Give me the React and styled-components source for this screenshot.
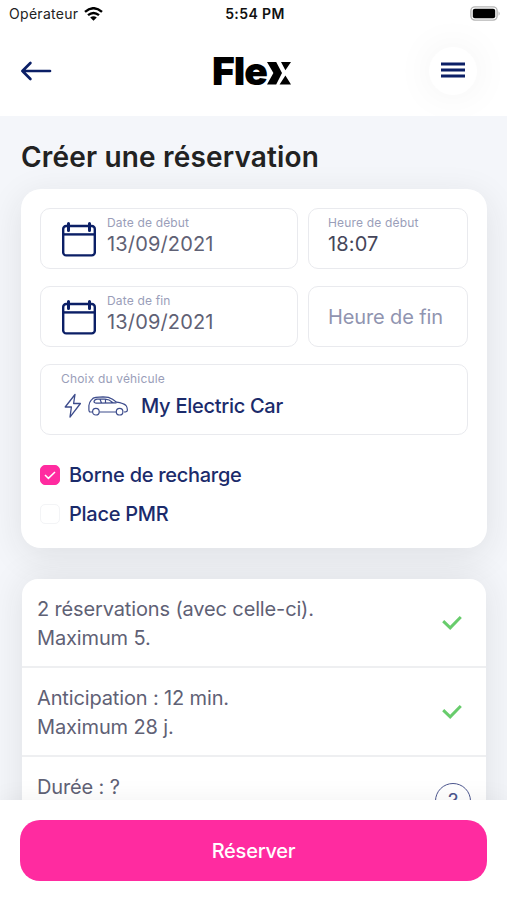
import React, { useState } from 'react';
import styled, { createGlobalStyle } from 'styled-components';

const checks = [
    { id: 'count', lines: ['2 réservations (avec celle-ci).', 'Maximum 5.'], ok: true },
    { id: 'anticipation', lines: ['Anticipation : 12 min.', 'Maximum 28 j.'], ok: true },
    { id: 'duration', lines: ['Durée : ?'], ok: false },
];

const CalendarIcon = () => (
    <svg width="36" height="36" viewBox="0 0 36 36" fill="none" stroke="#0b1f66" strokeWidth="2.4">
        <rect x="2.2" y="5" width="31.6" height="29.4" rx="3" />
        <path d="M2 13.4h32" />
        <path d="M7.5 2.6v7M28.5 2.6v7" strokeWidth="3" strokeLinecap="round" />
    </svg>
);

const CarIcon = () => (
    <svg width="40" height="20" viewBox="0 0 40 20" fill="none" stroke="#3d4c8c" strokeWidth="1.2">
        <path d="M4.4 16H2.2Q.9 16 .9 13.5V9.5Q1.2 6.5 3.2 4.2Q5 1.4 7.8 1.3L15 .9Q21 .9 24.6 3.2L28.5 6.2Q35.6 7.2 38 9.5Q39.6 11.5 39.3 14.5Q39.2 16 36 16" />
        <path d="M11.4 16h16.8M28.5 6.9L10 7.1Q6.4 7.2 6 5.8Q6.2 3.5 9 3.2H17Q21 3.1 25 6.7M12 3.2l1.5 3.8M17.5 3.2v3.8" />
        <circle cx="7.9" cy="15.7" r="3.3" />
        <circle cx="31.6" cy="15.7" r="3.3" />
    </svg>
);

const App = () => {
    const [charging, setCharging] = useState(true);
    const [disabledSpot, setDisabledSpot] = useState(false);

    return (
        <Screen>
            <GlobalStyle />
            <StatusBar>
                <Carrier>
                    Opérateur
                    <svg width="19" height="14" viewBox="0 0 19 14" fill="none" stroke="#000" strokeWidth="2.4">
                        <path d="M1 4.8Q9.5-2.4 18 4.8M4 8.2Q9.5 3.6 15 8.2" />
                        <path d="M6.2 10.6Q9.5 7.8 12.8 10.6L9.5 13.8Z" fill="#000" stroke="none" />
                    </svg>
                </Carrier>
                <Clock>5:54 PM</Clock>
                <Battery width="31" height="15" viewBox="0 0 31 15">
                    <rect x=".9" y=".9" width="26.2" height="13.2" rx="4" fill="#fff" stroke="#b5b5b5" strokeWidth="1.4" />
                    <rect x="2.8" y="2.8" width="22.4" height="9.4" rx="2" />
                    <path d="M28.6 5.2q2 2.3 0 4.6z" fill="#aaa" />
                </Battery>
            </StatusBar>
            <Header>
                <IconButton aria-label="Retour">
                    <svg width="32" height="20" viewBox="0 0 32 20" fill="none" stroke="#0b1f66" strokeWidth="2.7" strokeLinecap="round" strokeLinejoin="round">
                        <path d="M30 10H2.4M10.4 2L2.4 10l8 8" />
                    </svg>
                </IconButton>
                <Logo>
                    Fle
                    <svg width="24" height="23" viewBox="0 0 24 23">
                        <path d="M0 0H9.2L15 11L9.2 22.4H0L6.4 11ZM14 0H24L18.4 8.2ZM18.4 13.6L24 22.4H12.6Z" />
                    </svg>
                </Logo>
                <MenuButton aria-label="Menu">
                    <svg width="24" height="17" viewBox="0 0 24 17" stroke="#0b1f66" strokeWidth="3">
                        <path d="M0 2h24M0 8h24M0 14h24" />
                    </svg>
                </MenuButton>
            </Header>
            <Content>
                <Title>Créer une réservation</Title>
                <FormCard>
                    <FieldRow>
                        <Field>
                            <CalendarIcon />
                            <FieldText>
                                <Label>Date de début</Label>
                                <Value>13/09/2021</Value>
                            </FieldText>
                        </Field>
                        <Field>
                            <FieldText>
                                <Label>Heure de début</Label>
                                <Value $dark>18:07</Value>
                            </FieldText>
                        </Field>
                    </FieldRow>
                    <FieldRow>
                        <Field>
                            <CalendarIcon />
                            <FieldText>
                                <Label>Date de fin</Label>
                                <Value>13/09/2021</Value>
                            </FieldText>
                        </Field>
                        <Field>
                            <Placeholder>Heure de fin</Placeholder>
                        </Field>
                    </FieldRow>
                    <VehicleField>
                        <Label>Choix du véhicule</Label>
                        <Vehicle>
                            <svg width="18" height="26" viewBox="0 0 18 26" fill="none" stroke="#3d4c8c" strokeWidth="1.3" strokeLinejoin="round">
                                <path d="M11 1.5L1.2 14H7.4L6 24.2L16.4 10.5H9.6Z" />
                            </svg>
                            <CarIcon />
                            <VehicleName>My Electric Car</VehicleName>
                        </Vehicle>
                    </VehicleField>
                    <Options>
                        <Option onClick={() => setCharging(!charging)}>
                            <Checkbox $checked={charging}>
                                {charging && (
                                    <svg width="12" height="9" viewBox="0 0 12 9" fill="none" stroke="#fff" strokeWidth="1.5">
                                        <path d="M1 4l3.4 3.4L11 1" />
                                    </svg>
                                )}
                            </Checkbox>
                            <OptionName>Borne de recharge</OptionName>
                        </Option>
                        <Option onClick={() => setDisabledSpot(!disabledSpot)}>
                            <Checkbox $checked={disabledSpot} />
                            <OptionName>Place PMR</OptionName>
                        </Option>
                    </Options>
                </FormCard>
                <CheckList>
                    {checks.map(check => (
                        <CheckRow key={check.id}>
                            <div>
                                {check.lines.map(line => (
                                    <CheckLine key={line}>{line}</CheckLine>
                                ))}
                            </div>
                            {check.ok ? (
                                <Tick width="20" height="15" viewBox="0 0 20 15">
                                    <path d="M1.2 6.2l7 6.6L18.8 2" />
                                </Tick>
                            ) : (
                                <Unknown>?</Unknown>
                            )}
                        </CheckRow>
                    ))}
                </CheckList>
            </Content>
            <BottomBar>
                <SubmitButton>Réserver</SubmitButton>
            </BottomBar>
        </Screen>
    );
};

export default App;

const GlobalStyle = createGlobalStyle`
    * {
        box-sizing: border-box;
    }

    body {
        margin: 0;
        overflow: hidden;
        font-family: Inter, sans-serif;
    }

    svg {
        display: block;
        flex-shrink: 0;
    }

    button {
        border: 0;
        padding: 0;
        font-family: inherit;
        cursor: pointer;
    }
`;

const Screen = styled.div`
    display: flex;
    flex-direction: column;
    height: 100vh;
    background: #fff;
`;

const StatusBar = styled.div`
    display: grid;
    grid-template-columns: 1fr auto 1fr;
    align-items: center;
    height: 27px;
    flex-shrink: 0;
    padding: 0 6px 0 9px;
`;

const Carrier = styled.div`
    display: flex;
    align-items: center;
    gap: 6px;
    font-size: 14px;
    letter-spacing: 0.3px;
    color: #222;
`;

const Clock = styled.div`
    font-size: 14px;
    font-weight: 600;
    letter-spacing: 0.4px;
    color: #111;
`;

const Battery = styled.svg`
    justify-self: end;
`;

const Header = styled.header`
    display: flex;
    align-items: center;
    justify-content: space-between;
    height: 89px;
    flex-shrink: 0;
    padding: 0 30px 2px 20px;
`;

const IconButton = styled.button`
    display: flex;
    width: 48px;
    background: none;
`;

const Logo = styled.div`
    display: flex;
    align-items: baseline;
    margin-left: 6px;
    font-size: 39px;
    line-height: 44px;
    font-weight: 900;
    letter-spacing: -1px;
    color: #000;
`;

const MenuButton = styled.button`
    display: flex;
    align-items: center;
    justify-content: center;
    width: 48px;
    height: 48px;
    border-radius: 50%;
    background: #fff;
    box-shadow: 0 0 40px rgba(0, 0, 0, 0.06);
`;

const Content = styled.main`
    flex: 1;
    min-height: 0;
    overflow: hidden;
    padding: 23px 20px 0 21px;
    background: #f4f6fa;
`;

const Title = styled.h1`
    margin: 0 0 14px;
    font-size: 28px;
    line-height: 36px;
    font-weight: 600;
    letter-spacing: 0.17px;
    color: #222;
`;

const FormCard = styled.section`
    display: flex;
    flex-direction: column;
    gap: 17px;
    height: 359px;
    padding: 19px 19px 0;
    border-radius: 20px;
    background: #fff;
    box-shadow: 0 8px 35px rgba(35, 38, 42, 0.1);
`;

const FieldRow = styled.div`
    display: grid;
    grid-template-columns: 258px 1fr;
    gap: 10px;
`;

const Field = styled.div`
    display: flex;
    align-items: center;
    gap: 10px;
    height: 61px;
    padding: 0 0 0 20px;
    border: 1px solid #e9eaee;
    border-radius: 10px;

    &:last-child {
        padding-left: 19px;
    }
`;

const FieldText = styled.div`
    display: flex;
    flex-direction: column;
    padding-bottom: 6px;
`;

const Label = styled.span`
    font-size: 12px;
    line-height: 16px;
    letter-spacing: 0.17px;
    color: #9a9eb9;
`;

const Value = styled.span`
    font-size: 20px;
    line-height: 26px;
    letter-spacing: 0.15px;
    color: ${props => (props.$dark ? '#45465a' : '#5f6175')};
`;

const Placeholder = styled.span`
    padding-top: 1px;
    white-space: nowrap;
    font-size: 20px;
    letter-spacing: -0.12px;
    color: #9094b0;
`;

const VehicleField = styled.div`
    display: flex;
    flex-direction: column;
    height: 71px;
    padding: 6px 20px;
    border: 1px solid #e9eaee;
    border-radius: 10px;
`;

const Vehicle = styled.div`
    display: flex;
    align-items: center;
    height: 38px;
    padding-left: 3px;
    gap: 6px;
`;

const VehicleName = styled.span`
    margin-left: 7px;
    font-size: 20px;
    font-weight: 500;
    letter-spacing: -0.28px;
    color: #1b2b6b;
`;

const Options = styled.div`
    display: flex;
    flex-direction: column;
    gap: 9px;
    padding-top: 8px;
`;

const Option = styled.label`
    display: flex;
    align-items: center;
    gap: 9px;
    height: 30px;
`;

const Checkbox = styled.span`
    display: flex;
    align-items: center;
    justify-content: center;
    width: 20px;
    height: 20px;
    border: 1px solid ${props => (props.$checked ? '#ff2ba0' : '#f3f4f6')};
    border-radius: 5px;
    background: ${props => (props.$checked ? '#ff2ba0' : '#fff')};
`;

const OptionName = styled.span`
    font-size: 20px;
    font-weight: 500;
    letter-spacing: -0.28px;
    color: #1b2b6b;
`;

const CheckList = styled.section`
    margin: 31px 1px 0;
    height: 270px;
    border-radius: 16px 16px 0 0;
    background: #fff;
    box-shadow: 0 0 35px rgba(35, 38, 42, 0.1);
`;

const CheckRow = styled.div`
    display: flex;
    align-items: center;
    justify-content: space-between;
    height: 89px;
    padding: 2px 15px 0;
    border-bottom: 2px solid #eeeff1;

    &:last-child {
        align-items: flex-start;
        padding-top: 16px;
        border-bottom: 0;
    }
`;

const CheckLine = styled.div`
    font-size: 20px;
    line-height: 29px;
    letter-spacing: -0.14px;
    color: #5f6175;
`;

const Tick = styled.svg`
    margin: 0 9px 3px 0;
    fill: none;
    stroke: #68cc6c;
    stroke-width: 3;
`;

const Unknown = styled.div`
    display: flex;
    align-items: center;
    justify-content: center;
    width: 36px;
    height: 36px;
    margin-top: 10px;
    border: 1.5px solid #4c568e;
    border-radius: 50%;
    font-size: 20px;
    color: #4c568e;
`;

const BottomBar = styled.footer`
    z-index: 1;
    height: 100px;
    flex-shrink: 0;
    padding: 20px 20px 0;
    background: #fff;
    box-shadow: 0 0 24px rgba(0, 0, 0, 0.06);
`;

const SubmitButton = styled.button`
    width: 100%;
    height: 61px;
    border-radius: 20px;
    background: #ff2ba0;
    color: #fff;
    font-size: 20px;
    font-weight: 500;
    letter-spacing: -0.25px;
`;
